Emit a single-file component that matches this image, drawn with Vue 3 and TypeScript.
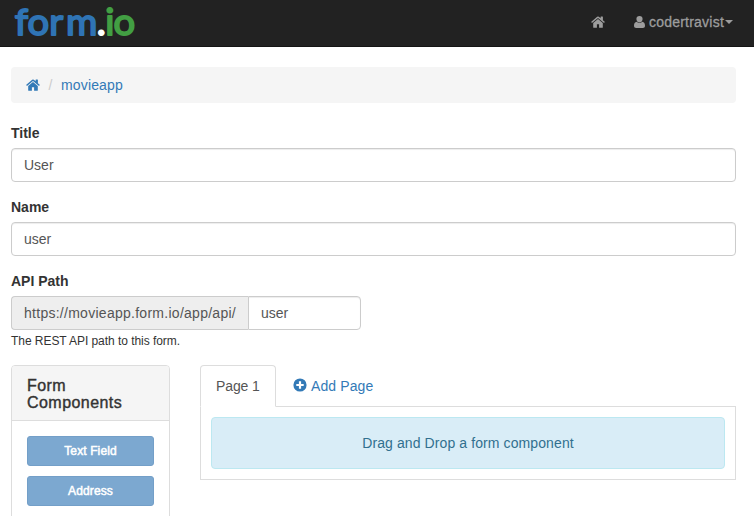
<script setup lang="ts">
import { ref } from 'vue'

interface Field {
  id: string
  label: string
  value: string
}

const fields = ref<Field[]>([
  { id: 'title', label: 'Title', value: 'User' },
  { id: 'name', label: 'Name', value: 'user' },
])
const path = ref<string>('user')
const components: string[] = ['Text Field', 'Address']
</script>

<template>
  <div class="page">
    <nav class="navbar">
      <a class="brand">
        <svg width="128" height="46" viewBox="0 0 128 46">
          <text class="wordmark" transform="scale(1.060 1)" y="34.700" x="3.500 15.500 36 51.800 80.900 88.800 96.700"><tspan class="blue">form</tspan><tspan class="white">.</tspan><tspan class="green">io</tspan></text>
        </svg>
      </a>
      <div class="nav-links">
        <svg class="home" width="14" height="12" viewBox="0 0 14 12">
          <path d="M7 2.900 2.200 6.900v4.300q0 .6.6.6h3.100V8.300h2.200v3.500h3.100q.6 0 .6-.6V6.900z" />
          <path d="M13.700 5.700 11.900 4.200V.9q0-.3-.3-.3H9.900q-.3 0-.3.3v1.400L7.800.8Q7 .2 6.200.8L.3 5.700q-.2.2 0 .5l.5.5q.2.2.5 0L7 2l5.700 4.700q.3.2.5 0l.5-.5q.2-.3 0-.5z" />
        </svg>
        <div class="account">
          <svg width="11" height="12" viewBox="0 0 11 12">
            <path d="M2.400 3.100a3.100 3.100 0 0 1 6.200 0c0 1.800-1.300 3.500-3.100 3.500S2.400 4.900 2.400 3.100zM2.800 5.700C.8 5.800 0 7.700 0 9.800 0 11.200.9 12 2.200 12h6.600c1.300 0 2.200-.8 2.200-2.200 0-2.100-.8-4-2.800-4.100-.7.900-1.700 1.400-2.700 1.400s-2-.5-2.700-1.400z" />
          </svg>
          <span>codertravist</span>
          <i class="caret"></i>
        </div>
      </div>
    </nav>

    <main class="container">
      <div class="breadcrumb">
        <svg class="home" width="14" height="12" viewBox="0 0 14 12">
          <path d="M7 2.900 2.200 6.900v4.300q0 .6.6.6h3.100V8.300h2.200v3.500h3.100q.6 0 .6-.6V6.900z" />
          <path d="M13.700 5.700 11.900 4.200V.9q0-.3-.3-.3H9.900q-.3 0-.3.3v1.400L7.800.8Q7 .2 6.200.8L.3 5.700q-.2.2 0 .5l.5.5q.2.2.5 0L7 2l5.700 4.700q.3.2.5 0l.5-.5q.2-.3 0-.5z" />
        </svg>
        <span class="slash">/</span>
        <a>movieapp</a>
      </div>

      <div v-for="field in fields" :key="field.id" class="form-group">
        <label :for="field.id">{{ field.label }}</label>
        <input :id="field.id" v-model="field.value" class="control" type="text" />
      </div>

      <div class="path-group">
        <label for="path">API Path</label>
        <div class="input-group">
          <span class="addon">https://movieapp.form.io/app/api/</span>
          <input id="path" v-model="path" class="control" type="text" />
        </div>
        <small>The REST API path to this form.</small>
      </div>

      <div class="builder">
        <aside class="panel">
          <h4>Form<br />Components</h4>
          <div class="panel-body">
            <button v-for="name in components" :key="name" type="button">{{ name }}</button>
          </div>
        </aside>
        <section class="pages">
          <div class="tabs">
            <a class="tab active">Page 1</a>
            <a class="tab add">
              <svg width="14" height="14" viewBox="0 0 14 14">
                <path fill-rule="evenodd" d="M7 .4a6.600 6.600 0 1 1 0 13.200A6.600 6.600 0 0 1 7 .4zM5.900 3.300v2.600H3.300v2.200h2.600v2.600h2.200V8.100h2.600V5.900H8.100V3.300z" />
              </svg>
              <span>Add Page</span>
            </a>
          </div>
          <div class="tab-content">
            <div class="drop">Drag and Drop a form component</div>
          </div>
        </section>
      </div>
    </main>
  </div>
</template>

<style>
body {
  background: #fff;
}
</style>

<style scoped>
.page {
  height: 516px;
  overflow: hidden;
  font: 14px/20px "Liberation Sans", Arial, sans-serif;
  color: #333;
}
.page *,
.page {
  box-sizing: border-box;
}
svg {
  display: block;
  flex: none;
  fill: currentColor;
  overflow: visible;
}
.navbar {
  height: 47px;
  display: flex;
  justify-content: space-between;
  padding: 0 21px 0 11px;
  background: #222;
  border-bottom: 1px solid #151515;
  color: #9d9d9d;
}
.wordmark {
  font: 400 36px Lato, sans-serif;
  stroke-width: 1.8px;
  stroke-linejoin: round;
}
.blue {
  fill: #2f74b5;
  stroke: #2f74b5;
}
.white {
  fill: #fff;
  stroke: #fff;
}
.green {
  fill: #429f43;
  stroke: #429f43;
}
.nav-links {
  display: flex;
  align-items: center;
  height: 44px;
  gap: 29px;
}
.account {
  display: flex;
  align-items: center;
  -webkit-text-stroke: 0.3px currentColor;
}
.account span {
  margin-left: 4px;
  letter-spacing: 0.22px;
}
.caret {
  margin-left: 1px;
  border: 4px solid transparent;
  border-top-color: currentColor;
  border-bottom: 0;
}
.container {
  padding: 20px 18px 0 11px;
}
.breadcrumb {
  height: 36px;
  display: flex;
  align-items: center;
  padding: 0 15px;
  margin-bottom: 20px;
  background: #f5f5f5;
  border-radius: 4px;
  color: #337ab7;
}
.breadcrumb a {
  letter-spacing: 0.15px;
}
.slash {
  width: 21px;
  text-align: center;
  color: #ccc;
}
label {
  display: block;
  height: 25px;
  font-weight: 700;
}
.form-group {
  margin-bottom: 15px;
}
.control {
  display: block;
  width: 100%;
  height: 34px;
  padding: 6px 12px;
  border: 1px solid #ccc;
  border-radius: 4px;
  background: #fff;
  box-shadow: inset 0 1px 1px rgba(0, 0, 0, 0.075);
  font: inherit;
  color: #555;
  outline: 0;
}
.input-group {
  display: flex;
  width: 350px;
  height: 34px;
}
.addon {
  flex: 0 0 237px;
  padding: 6px 12px;
  border: 1px solid #ccc;
  border-right: 0;
  border-radius: 4px 0 0 4px;
  background: #eee;
  color: #555;
  white-space: nowrap;
  letter-spacing: 0.27px;
}
.input-group .control {
  flex: 1;
  min-width: 0;
  border-radius: 0 4px 4px 0;
}
small {
  display: block;
  height: 35px;
  padding-top: 1px;
  font-size: 12px;
  letter-spacing: -0.05px;
}
.builder {
  display: flex;
  gap: 30px;
}
.panel {
  width: 159px;
  height: 190px;
  border: 1px solid #ddd;
  border-radius: 4px;
}
h4 {
  height: 55px;
  margin: 0;
  padding: 11px 15px 0;
  border-bottom: 1px solid #ddd;
  border-radius: 3px 3px 0 0;
  background: #f5f5f5;
  font: 400 16px/17px "Liberation Sans", Arial, sans-serif;
  letter-spacing: 0.45px;
  -webkit-text-stroke: 0.4px #333;
}
.panel-body {
  display: flex;
  flex-direction: column;
  gap: 10px;
  padding: 15px;
}
button {
  height: 30px;
  padding: 0;
  border: 1px solid #739fc8;
  border-radius: 3px;
  background: #7ca8d0;
  color: #fff;
  font: 12px/18px "Liberation Sans", Arial, sans-serif;
  letter-spacing: 0.12px;
  -webkit-text-stroke: 0.5px #fff;
}
.pages {
  flex: 1;
}
.tabs {
  display: flex;
  height: 42px;
  border-bottom: 1px solid #ddd;
}
.tab {
  height: 42px;
  display: flex;
  align-items: center;
  border: 1px solid transparent;
  color: #337ab7;
}
.active {
  width: 76px;
  padding-left: 15px;
  border-color: #ddd;
  border-bottom-color: #fff;
  border-radius: 4px 4px 0 0;
  background: #fff;
  color: #555;
  letter-spacing: -0.1px;
}
.add {
  gap: 4px;
  padding-left: 16px;
  letter-spacing: 0.1px;
}
.add svg {
  margin-top: -2px;
}
.tab-content {
  height: 73px;
  padding: 10px;
  border: 1px solid #ddd;
  border-top: 0;
}
.drop {
  height: 52px;
  border: 1px solid #bce8f1;
  border-radius: 4px;
  background: #d9edf7;
  color: #31708f;
  line-height: 50px;
  text-align: center;
  letter-spacing: 0.1px;
}
</style>
